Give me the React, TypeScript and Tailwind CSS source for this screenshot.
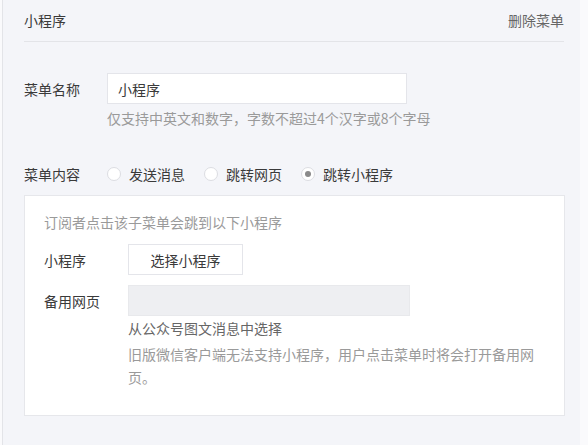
import React from "react";

const font = { fontFamily: '"Noto Sans CJK SC", "Noto Sans", sans-serif' };

function Radio({ label, checked }: { label: string; checked?: boolean }) {
  return (
    <div className="flex items-center">
      <span className="w-[14px] h-[14px] rounded-full border border-[#dcdde2] bg-white flex items-center justify-center mr-[8px]">
        {checked && <span className="w-[6px] h-[6px] rounded-full bg-[#8a8a8a]" />}
      </span>
      <span className="text-[14px] leading-[20px] text-[#3a3a3a]">{label}</span>
    </div>
  );
}

export default function App() {
  return (
    <div className="w-[588px] h-[445px] bg-[#fafafc] flex overflow-hidden" style={font}>
      <div className="ml-[2px] w-[578px] h-full bg-[#f4f5f9] border-l border-[#e3e4e8] pl-[21px] pr-[16px]">
        <div className="flex justify-between pt-[10px] pb-[11px] border-b border-[#e3e4e8]">
          <span className="text-[14px] leading-[20px] text-[#3a3a3a]">小程序</span>
          <span className="text-[14px] leading-[20px] text-[#666666]">删除菜单</span>
        </div>

        <div className="flex items-center mt-[31px]">
          <span className="w-[83px] text-[14px] leading-[20px] text-[#3a3a3a]">菜单名称</span>
          <div className="w-[300px] h-[31px] bg-white border border-[#e4e5ea] flex items-center pl-[10px]">
            <span className="text-[14px] leading-[20px] text-[#3a3a3a]">小程序</span>
          </div>
        </div>
        <div className="ml-[83px] mt-[4px] text-[14px] leading-[20px] text-[#9a9a9a]">
          仅支持中英文和数字，字数不超过4个汉字或8个字母
        </div>

        <div className="flex items-center mt-[36px]">
          <span className="w-[83px] text-[14px] leading-[20px] text-[#3a3a3a]">菜单内容</span>
          <div className="flex items-center gap-[19px]">
            <Radio label="发送消息" />
            <Radio label="跳转网页" />
            <Radio label="跳转小程序" checked />
          </div>
        </div>

        <div className="mt-[11px] w-[541px] h-[221px] bg-white border border-[#e6e7eb] pl-[19px] pt-[16px]">
          <div className="text-[14px] leading-[20px] text-[#9a9a9a]">订阅者点击该子菜单会跳到以下小程序</div>
          <div className="flex items-center mt-[12px]">
            <span className="w-[84px] text-[14px] leading-[20px] text-[#3a3a3a]">小程序</span>
            <div className="w-[115px] h-[31px] bg-white border border-[#e4e5ea] flex items-center justify-center">
              <span className="text-[14px] leading-[20px] text-[#3a3a3a]">选择小程序</span>
            </div>
          </div>
          <div className="flex items-center mt-[10px]">
            <span className="w-[84px] text-[14px] leading-[20px] text-[#3a3a3a]">备用网页</span>
            <div className="w-[282px] h-[31px] bg-[#eeeff2] border border-[#e8e9ec]" />
          </div>
          <div className="ml-[84px] mt-[2px] text-[14px] leading-[20px] text-[#666666]">从公众号图文消息中选择</div>
          <div className="ml-[84px] mt-[5px] w-[412px] text-[14px] leading-[23px] text-[#9a9a9a]">
            旧版微信客户端无法支持小程序，用户点击菜单时将会打开备用网页。
          </div>
        </div>
      </div>
    </div>
  );
}
